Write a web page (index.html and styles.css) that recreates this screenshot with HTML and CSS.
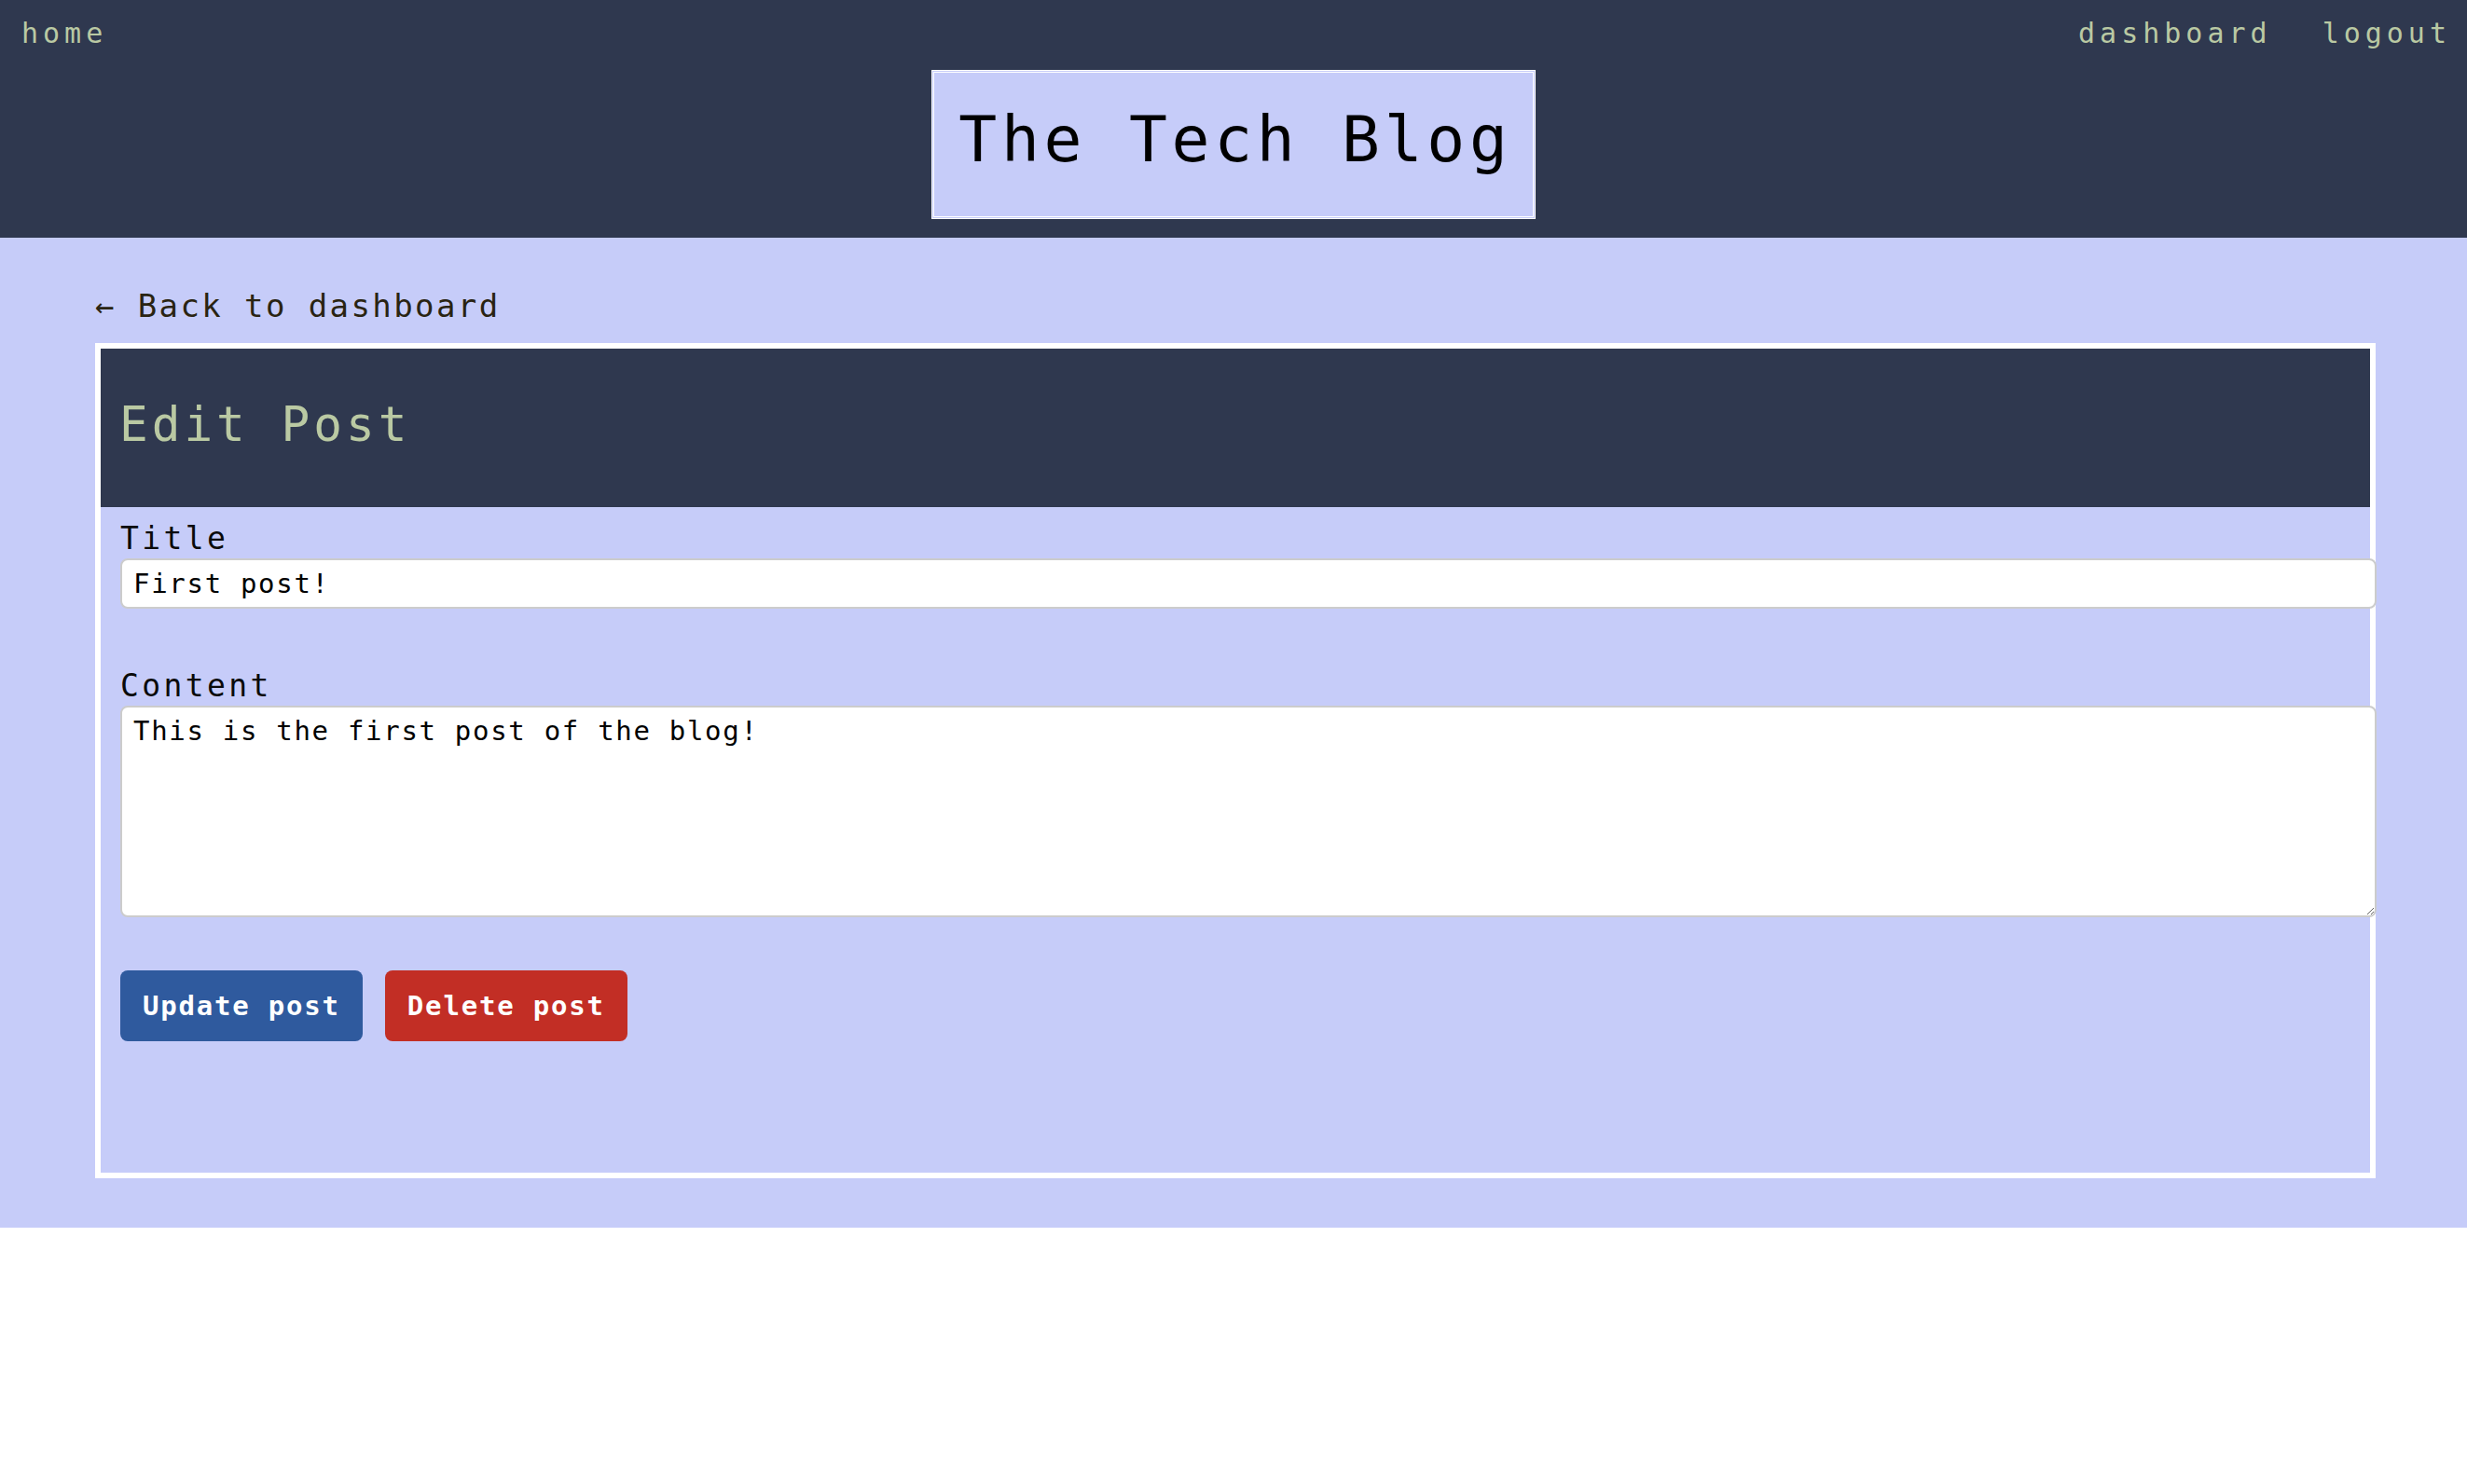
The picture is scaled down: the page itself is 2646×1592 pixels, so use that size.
FILE: index.html
```html
<!DOCTYPE html>
<html lang="en">
<head>
<meta charset="utf-8">
<title>The Tech Blog</title>
<link rel="stylesheet" href="styles.css">
</head>
<body>
<header class="site-header">
  <nav class="nav">
    <a class="nav-link" href="#">home</a>
    <div class="nav-right">
      <a class="nav-link" href="#">dashboard</a>
      <a class="nav-link" href="#">logout</a>
    </div>
  </nav>
  <div class="logo-wrap">
    <h1 class="logo">The Tech Blog</h1>
  </div>
</header>
<main class="main">
  <a class="back-link" href="#">← Back to dashboard</a>
  <section class="card">
    <div class="card-header">
      <h2 class="card-title">Edit Post</h2>
    </div>
    <form class="form">
      <div class="field">
        <label class="label" for="title">Title</label>
        <input class="input" id="title" type="text" value="First post!">
      </div>
      <div class="field field-last">
        <label class="label" for="content">Content</label>
        <textarea class="textarea" id="content">This is the first post of the blog!</textarea>
      </div>
      <div class="actions">
        <button type="button" class="btn btn-update">Update post</button>
        <button type="button" class="btn btn-delete">Delete post</button>
      </div>
    </form>
  </section>
</main>
</body>
</html>
```

FILE: styles.css
```css
html, body {
  margin: 0;
  padding: 0;
  background: #ffffff;
}

body {
  font-family: "DejaVu Sans Mono", "Liberation Mono", monospace;
}

a {
  text-decoration: none;
}

.site-header {
  background: #2f384f;
  padding: 18px 0 20px;
}

.nav {
  display: flex;
  justify-content: space-between;
  align-items: flex-start;
  padding: 0 17px 0 23px;
  font-size: 30px;
  line-height: 35px;
  letter-spacing: 5px;
}

.nav-right {
  display: flex;
  gap: 54px;
}

.nav-link {
  color: #bac9a3;
}

.logo-wrap {
  display: flex;
  justify-content: center;
  margin-top: 22px;
}

.logo {
  margin: 0;
  background: #c6ccf9;
  border: 3px double #ffffff;
  padding: 32px 22px 43px 26px;
  font-size: 68px;
  line-height: 79px;
  font-weight: normal;
  letter-spacing: 4.7px;
  color: #000000;
}

.main {
  background: #c6ccf9;
  padding: 53px 98px 53px 102px;
}

.back-link {
  display: block;
  color: #2a2412;
  font-size: 34px;
  line-height: 40px;
  letter-spacing: 2.4px;
  margin-bottom: 20px;
}

.card {
  border: 6px solid #ffffff;
  background: #c6ccf9;
}

.card-header {
  background: #2f384f;
}

.card-title {
  margin: 0;
  padding: 52px 20px 59px;
  font-size: 51px;
  line-height: 59px;
  font-weight: normal;
  letter-spacing: 4px;
  color: #bac9a3;
}

.form {
  padding: 15px 21px 141px;
}

.field {
  margin-bottom: 64px;
}

.field-last {
  margin-bottom: 57px;
}

.label {
  display: block;
  font-size: 33px;
  line-height: 38px;
  letter-spacing: 3.4px;
  color: #0a0a0a;
  margin-bottom: 2px;
}

.input,
.textarea {
  display: block;
  box-sizing: content-box;
  width: 100%;
  margin: 0;
  padding: 8px 12px;
  border: 2px solid #cccccc;
  border-radius: 8px;
  background: #ffffff;
  font-family: "DejaVu Sans Mono", monospace;
  font-size: 29px;
  line-height: 34px;
  letter-spacing: 1.7px;
  color: #000000;
  outline: none;
}

.input {
  height: 34px;
}

.textarea {
  height: 207px;
  resize: vertical;
}

.actions {
  display: flex;
  gap: 24px;
}

.btn {
  height: 76px;
  padding: 0 24px;
  border: none;
  border-radius: 8px;
  font-family: "DejaVu Sans Mono", monospace;
  font-size: 29px;
  font-weight: bold;
  letter-spacing: 1.8px;
  color: #ffffff;
  cursor: pointer;
}

.btn-update {
  background: #2f5a9e;
}

.btn-delete {
  background: #c22e25;
}
```
